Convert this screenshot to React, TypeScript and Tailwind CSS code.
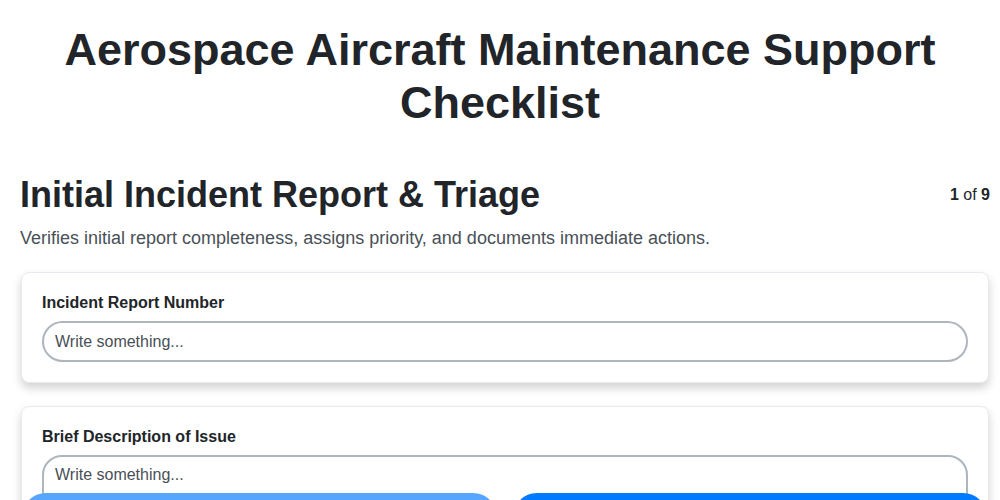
import React from "react";

export default function App() {
  return (
    <div className="min-h-screen bg-white text-[#212529]" style={{ fontFamily: '"Liberation Sans", Arial, sans-serif' }}>
      <h1 className="px-5 pt-[23px] text-center text-[45px] font-bold leading-[53px] text-[#212529]">
        Aerospace Aircraft Maintenance Support
        <br />
        Checklist
      </h1>
      <div className="pb-28 pl-5 pr-[10px]">
        <div className="mt-[44px] flex items-start justify-between">
          <h2 className="text-[36px] font-semibold leading-[44px] text-[#212529]">Initial Incident Report &amp; Triage</h2>
          <div className="pt-[10px] text-[16px] text-[#212529]">
            <span className="font-bold">1</span> of <span className="font-bold">9</span>
          </div>
        </div>
        <p className="mt-[9px] text-[18px] leading-[24px] text-[#495057]">
          Verifies initial report completeness, assigns priority, and documents immediate actions.
        </p>
        <div className="mt-[22px] flex flex-col gap-[23px]">
          <div className="mx-[1px] rounded-lg border border-[#e9e9ef] bg-white p-5 shadow-[0_5px_10px_rgba(0,0,0,0.18)]">
            <label className="block text-[16px] font-bold leading-[19px] text-[#212529]">Incident Report Number</label>
            <input
              placeholder="Write something..."
              className="mt-[9px] h-[41px] w-full rounded-full border-2 border-[#adb5bd] bg-white px-[11px] text-[16px] text-[#495057] outline-none placeholder:text-[#495057]"
            />
          </div>
          <div className="mx-[1px] rounded-lg border border-[#e9e9ef] bg-white p-5 shadow-[0_5px_10px_rgba(0,0,0,0.18)]">
            <label className="block text-[16px] font-bold leading-[19px] text-[#212529]">Brief Description of Issue</label>
            <textarea
              placeholder="Write something..."
              rows={4}
              className="mt-[9px] block w-full resize-none rounded-[20px] border-2 border-[#adb5bd] bg-white px-[11px] py-[6px] text-[16px] text-[#495057] outline-none placeholder:text-[#495057]"
            />
          </div>
        </div>
      </div>
      <div className="fixed bottom-0 left-0 right-0 flex gap-4 pl-[22px] pr-[13px]">
        <button className="h-[48px] flex-1 translate-y-[41px] rounded-[24px] bg-[#56a6ff] pt-[10px] text-white">
          <span className="block translate-y-[20px]">Previous</span>
        </button>
        <button className="h-[48px] flex-1 translate-y-[41px] rounded-[24px] bg-[#007bff] pt-[10px] text-white">
          <span className="block translate-y-[20px]">Next</span>
        </button>
      </div>
    </div>
  );
}
